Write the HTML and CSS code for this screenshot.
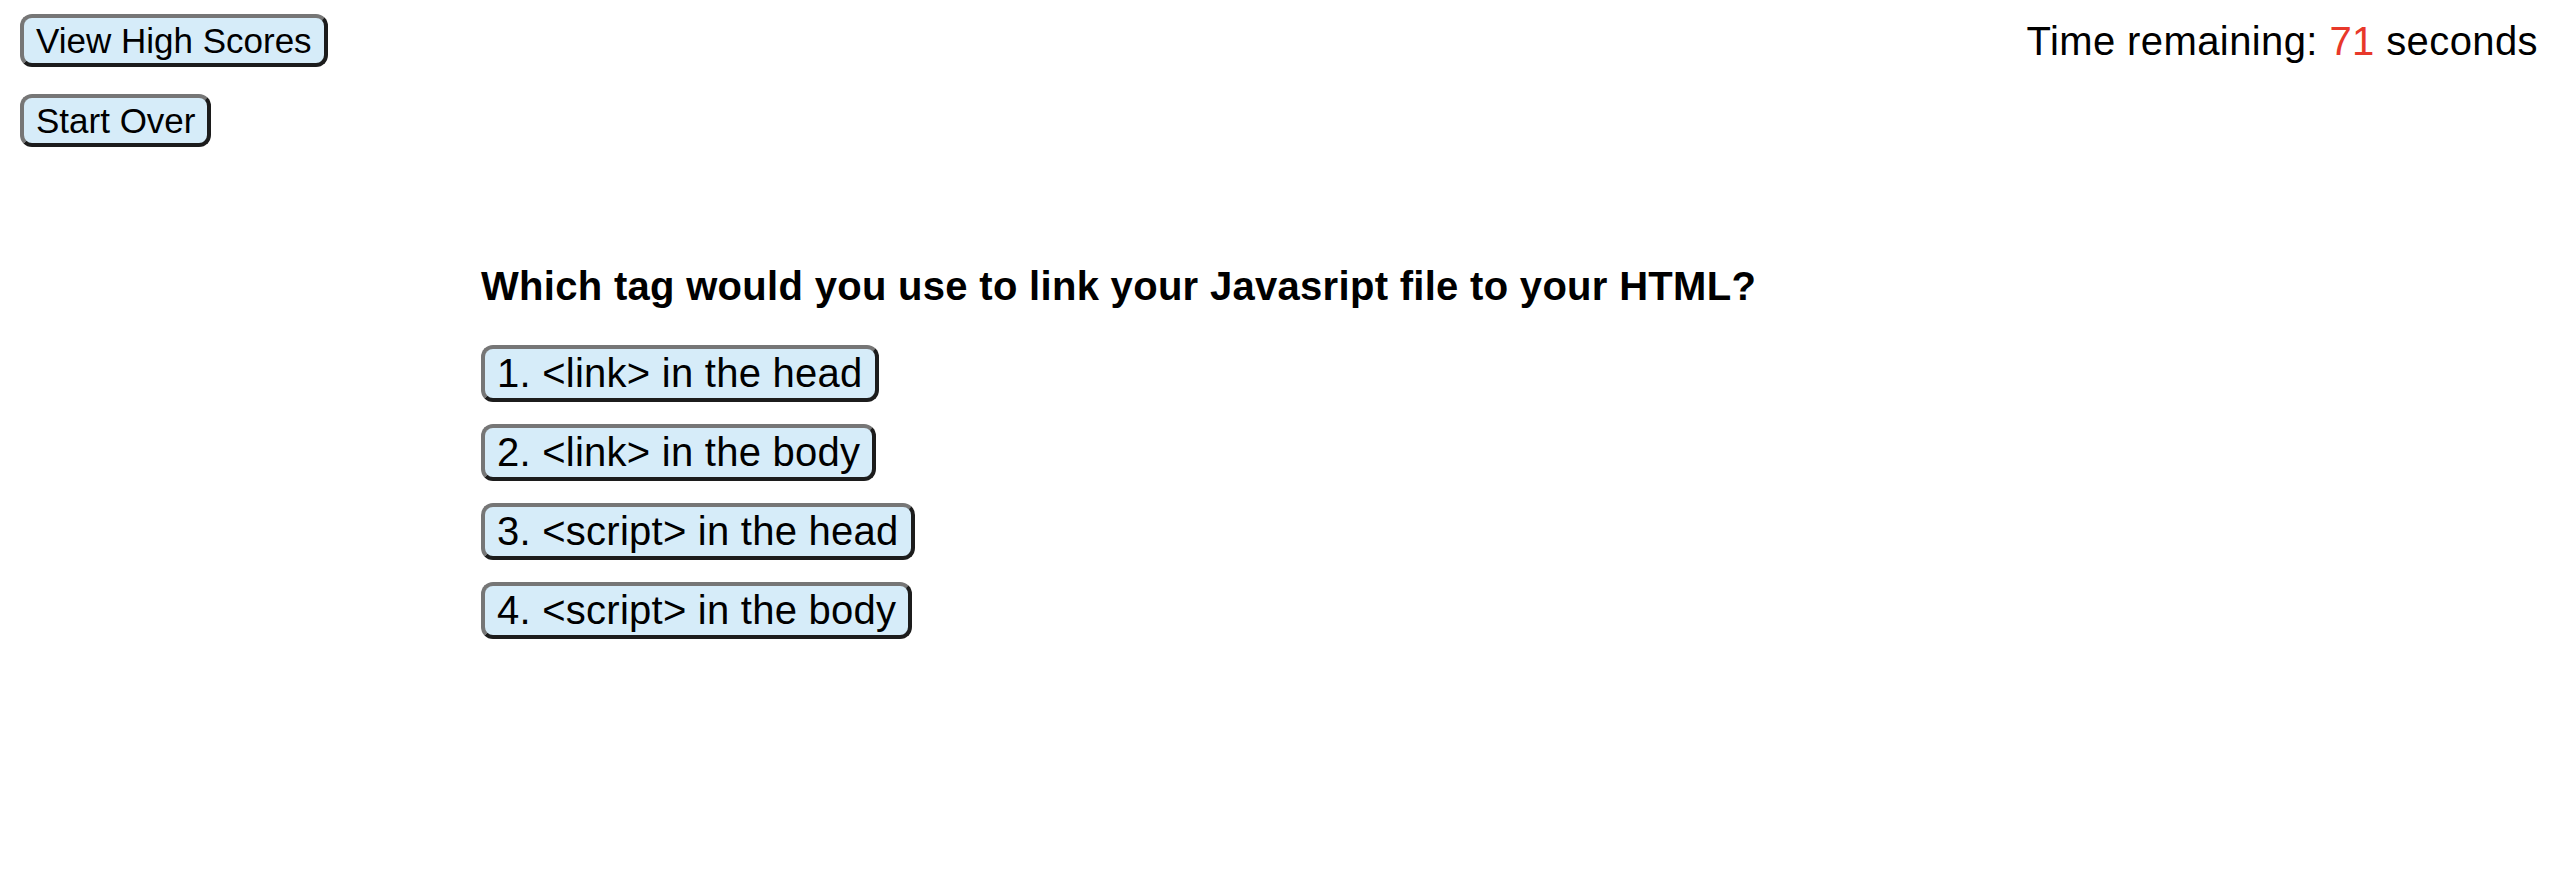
FILE: index.html
```html
<!DOCTYPE html>
<html lang="en">
<head>
<meta charset="utf-8">
<title>Code Quiz</title>
<link rel="stylesheet" href="styles.css">
</head>
<body>
<header class="topbar">
  <div class="controls">
    <button class="btn btn-top">View High Scores</button>
    <button class="btn btn-top">Start Over</button>
  </div>
  <div class="timer">Time remaining: <span class="count">71</span> seconds</div>
</header>
<main class="quiz">
  <h2 class="question">Which tag would you use to link your Javasript file to your HTML?</h2>
  <div class="answers">
    <button class="btn btn-answer">1. &lt;link&gt; in the head</button>
    <button class="btn btn-answer">2. &lt;link&gt; in the body</button>
    <button class="btn btn-answer">3. &lt;script&gt; in the head</button>
    <button class="btn btn-answer">4. &lt;script&gt; in the body</button>
  </div>
</main>
</body>
</html>
```

FILE: styles.css
```css
html, body {
  margin: 0;
  padding: 0;
  background: #ffffff;
}
body {
  font-family: "Liberation Sans", Arial, Helvetica, sans-serif;
  color: #000000;
}
.topbar {
  display: flex;
  justify-content: space-between;
  align-items: flex-start;
  padding: 14px 18px 0 20px;
}
.controls {
  display: flex;
  flex-direction: column;
  align-items: flex-start;
  gap: 27px;
}
.btn {
  font-family: "Liberation Sans", Arial, Helvetica, sans-serif;
  color: #000000;
  background: #d6ecf9;
  border-style: solid;
  border-width: 4px;
  border-color: #767676 #1c1c1c #1c1c1c #767676;
  border-radius: 12px;
  margin: 0;
  cursor: pointer;
}
.btn-top {
  font-size: 35px;
  line-height: 39px;
  padding: 3px 12px;
}
.timer {
  font-size: 40px;
  line-height: 45px;
  letter-spacing: 0.4px;
  margin-top: 5px;
}
.count {
  color: #e8382a;
}
.quiz {
  padding: 116px 0 0 481px;
}
.question {
  font-size: 40px;
  font-weight: bold;
  line-height: 46px;
  letter-spacing: 0.3px;
  margin: 0 0 36px 0;
}
.answers {
  display: flex;
  flex-direction: column;
  align-items: flex-start;
  gap: 22px;
}
.btn-answer {
  font-size: 40px;
  line-height: 45px;
  letter-spacing: 0.25px;
  padding: 2px 12px;
}
```
